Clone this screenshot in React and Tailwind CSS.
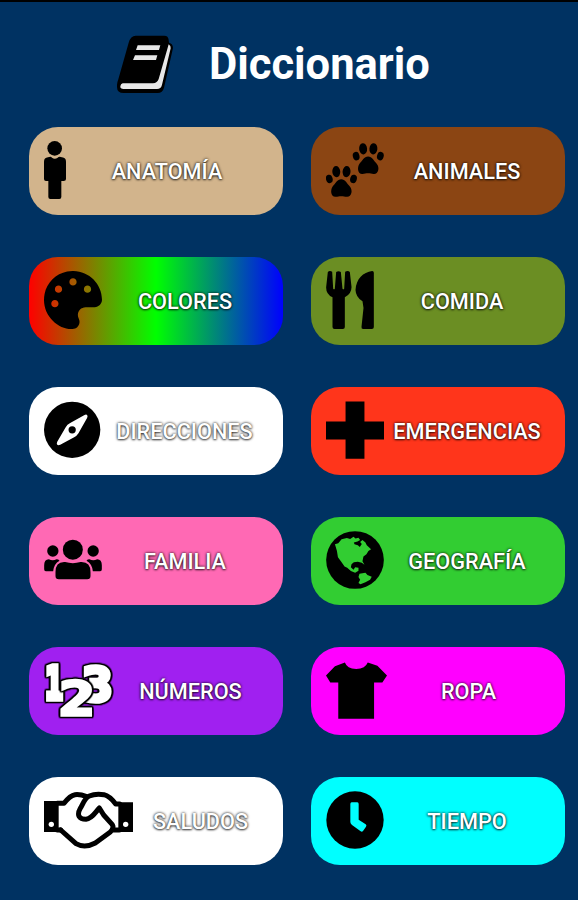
import React from "react";
import { FaPalette } from "react-icons/fa";

const PersonIcon = () => (
  <svg viewBox="72 64 66 174" className="h-[58px] w-[22px] shrink-0">
    <circle cx="104" cy="86" r="22" />
    <path d="M84 113 Q93 109 96 114 Q104 120 113 114 Q117 109 126 113 Q138 114 138 126 V178 Q138 184 131 184 H124 V232 Q124 238 118 238 H91 Q85 238 85 232 V184 H78 Q72 184 72 178 V126 Q72 114 84 113Z" />
  </svg>
);

const Paw = () => (
  <>
    <ellipse cx="10" cy="39" rx="10" ry="13" transform="rotate(-15 10 39)" />
    <ellipse cx="31" cy="17" rx="12" ry="17" transform="rotate(-5 31 17)" />
    <ellipse cx="62" cy="17" rx="12" ry="17" transform="rotate(5 62 17)" />
    <ellipse cx="83" cy="39" rx="10" ry="13" transform="rotate(15 83 39)" />
    <path d="M46 40 C58 40 64 53 72 62 C82 74 77 94 63 93 C56 93 53 91 46 91 C39 91 36 93 29 93 C15 94 12 74 20 62 C28 53 34 40 46 40Z" />
  </>
);

const PawsIcon = () => (
  <svg viewBox="62 64 175 174" className="h-[58px] w-[58px] shrink-0">
    <g transform="translate(143 70)"><Paw /></g>
    <g transform="translate(62 139)"><Paw /></g>
  </svg>
);

const CutleryIcon = () => (
  <svg viewBox="62 64 143 174" className="h-[58px] w-[48px] shrink-0">
    <path d="M67 67 Q72 62 80 66 L83 117 Q86 121 88 117 L92 67 Q99 62 106 67 L111 117 Q114 121 116 117 L119 66 Q128 62 133 67 L138 111 Q139 132 118 143 V232 Q118 238 112 238 H87 Q81 238 81 232 V143 Q61 133 62 112Z" />
    <path d="M200 64 Q205 64 205 69 V232 Q205 238 199 238 H173 Q167 238 168 231 L174 175 L171 155 Q151 143 150 121 C152 87 173 68 200 64Z" />
  </svg>
);

const CompassIcon = () => (
  <svg viewBox="72 65 172 173" className="h-[58px] w-[57px] shrink-0">
    <circle cx="157" cy="151" r="85" />
    <path d="M202 106 Q205 109 202 115 L176 161 Q171 169 163 173 L121 196 Q115 199 112 196 Q109 193 112 187 L137 144 Q142 134 151 130 L193 107 Q199 103 202 106Z" fill="white" />
    <circle cx="157" cy="151" r="11" />
  </svg>
);

const CrossIcon = () => (
  <svg viewBox="62 64 175 174" className="h-[58px] w-[58px] shrink-0">
    <path d="M121 65H178V125H237V180H178V238H121V180H62V125H121Z" />
  </svg>
);

const FamilyIcon = () => (
  <svg viewBox="72 64 173 174" className="h-[58px] w-[58px] shrink-0">
    <circle cx="158" cy="120" r="30" />
    <circle cx="98" cy="124" r="17" />
    <circle cx="219" cy="124" r="17" />
    <path d="M135 157 Q158 164 181 157 Q211 155 211 187 V199 Q211 209 201 209 H116 Q106 209 106 199 V187 Q106 155 135 157Z" />
    <path d="M86 149 Q98 155 109 149 Q115 149 118 153 Q101 162 99 185 H77 Q72 185 72 179 V167 Q72 149 86 149Z" />
    <path d="M231 149 Q219 155 208 149 Q202 149 199 153 Q216 162 218 185 H240 Q245 185 245 179 V167 Q245 149 231 149Z" />
  </svg>
);

const GlobeIcon = () => (
  <svg viewBox="62 64 175 175" className="h-[58px] w-[58px] shrink-0">
    <circle cx="149.500" cy="151.500" r="87" />
    <path
      d="M89 104 L99 101 L109 89 L125 85 L135 88 L145 81 L151 87 L160 84 L165 91 L157 96 L146 99 L148 104 L158 107 L164 112 L170 103 L165 97 L172 91 L181 99 L185 107 L198 119 L190 124 L184 134 L175 141 L172 155 L178 166 L170 160 L158 157 L146 158 L139 164 L137 173 L145 181 L150 173 L160 175 L160 184 L150 190 L137 185 L126 175 L118 171 L108 157 L98 143 L95 124Z"
      fill="#32cd32"
    />
    <path d="M163 193 L181 190 L187 197 L200 202 L195 211 L181 219 L166 225 L160 221 L165 211 L160 203Z" fill="#32cd32" />
  </svg>
);

const digitClass =
  "[filter:drop-shadow(4px_0_0_#000)_drop-shadow(-4px_0_0_#000)_drop-shadow(0_4px_0_#000)_drop-shadow(0_-4px_0_#000)]";

const NumbersIcon = () => (
  <svg viewBox="72 64 205 176" className="h-[58px] w-[69px] shrink-0 overflow-visible">
    <g
      fill="white"
      stroke="white"
      strokeLinejoin="miter"
      className="font-['DejaVu_Sans_Mono',monospace] font-bold"
    >
      <text x="74" y="178" fontSize="134" strokeWidth="17" textLength="53" lengthAdjust="spacingAndGlyphs" className={digitClass}>1</text>
      <text x="186" y="185" fontSize="138" strokeWidth="14" textLength="91" lengthAdjust="spacingAndGlyphs" className={digitClass}>3</text>
      <text x="116" y="229" fontSize="141" strokeWidth="10" textLength="108" lengthAdjust="spacingAndGlyphs" className={digitClass}>2</text>
    </g>
  </svg>
);

const ShirtIcon = () => (
  <svg viewBox="64 65 184 174" className="h-[58px] w-[61px] shrink-0">
    <path d="M121 69 Q127 87 155 89 Q183 87 190 69 L219 79 L248 108 L234 129 H209 V239 H101 V129 H77 L64 108 L91 80Z" />
  </svg>
);

const HandshakeIcon = () => (
  <svg viewBox="72 64 267 174" className="h-[58px] w-[89px] shrink-0">
    <path d="M72 94H116V187H72ZM295 98H339V187H295Z" />
    <g fill="none" stroke="black" strokeWidth="15" strokeLinejoin="round" strokeLinecap="round">
      <path d="M112 101 H132 Q150 77 165 75 Q180 73 200 81" />
      <path d="M299 103 H287 Q269 79 252 75 Q226 71 208 79 C194 85 190 101 181 116 C169 137 178 149 198 149 C216 147 225 129 238 115 L251 136 L277 165 Q283 175 271 187 L226 220 Q194 237 168 222 L122 181" />
      <path d="M280 181 H298" />
      <path d="M112 181 H122" />
    </g>
    <circle cx="94" cy="164" r="8" fill="white" />
    <circle cx="317" cy="164" r="8" fill="white" />
  </svg>
);

const ClockIcon = () => (
  <svg viewBox="63 456 174 174" className="h-[58px] w-[58px] shrink-0">
    <circle cx="150" cy="543" r="86" />
    <path d="M140 490 H157 Q161 490 161 495 V542 L182 556 Q186 559 183 563 L174 576 Q171 580 167 577 L141 558 Q136 554 136 549 V495 Q136 490 140 490Z" fill="#00ffff" />
  </svg>
);

const BookIcon = () => (
  <svg viewBox="50 104 168 174" className="h-[58px] w-[56px] shrink-0">
    <path d="M106 106 H192 Q204 106 205 119 L206 127 Q218 130 218 143 L191 262 Q187 278 172 278 H70 Q50 278 50 260 Q49 250 54 237 L85 127 Q91 106 106 106Z" />
    <path d="M205 132 Q212 136 211 144 L185 253 Q182 266 170 266 H70 Q59 266 60 258 Q61 250 67 249 H158 Q171 248 175 236 L201 146Z" fill="#e8e8e8" />
    <path d="M112 135 H180 L176 149 H107ZM104 165 H171 L167 179 H98Z" fill="#e8e8e8" />
  </svg>
);

const categories = [
  { name: "ANATOMÍA", icon: <PersonIcon />, bg: "bg-[#d2b48c]" },
  { name: "ANIMALES", icon: <PawsIcon />, bg: "bg-[#8b4513]" },
  {
    name: "COLORES",
    icon: <FaPalette className="h-[58px] w-[58px] shrink-0" />,
    bg: "bg-[linear-gradient(90deg,#ff0000,#00ff00,#0000ff)]",
  },
  { name: "COMIDA", icon: <CutleryIcon />, bg: "bg-[#6b8e23]" },
  { name: "DIRECCIONES", icon: <CompassIcon />, bg: "bg-white" },
  { name: "EMERGENCIAS", icon: <CrossIcon />, bg: "bg-[#ff351b]" },
  { name: "FAMILIA", icon: <FamilyIcon />, bg: "bg-[#ff69b4]" },
  { name: "GEOGRAFÍA", icon: <GlobeIcon />, bg: "bg-[#32cd32]" },
  { name: "NÚMEROS", icon: <NumbersIcon />, bg: "bg-[#a020f0]" },
  { name: "ROPA", icon: <ShirtIcon />, bg: "bg-[#ff00ff]" },
  { name: "SALUDOS", icon: <HandshakeIcon />, bg: "bg-white" },
  { name: "TIEMPO", icon: <ClockIcon />, bg: "bg-[#00ffff]" },
];

const App = () => {
  return (
    <main className="h-[900px] w-[578px] overflow-hidden border-t-2 border-black bg-[#003262] font-[Roboto,sans-serif] text-white">
      {/* Header */}
      <header className="flex h-[125px] items-center gap-9 pb-0.5 pl-[117px] text-black">
        <BookIcon />
        <h1 className="pt-[3px] text-[43.500px] leading-none font-bold text-white">Diccionario</h1>
      </header>

      {/* Categories */}
      <div className="grid grid-cols-[254px_254px] gap-x-7 gap-y-[42.5px] pl-[29px]">
        {categories.map(({ name, icon, bg }) => (
          <button
            key={name}
            className={`flex h-[87.5px] items-center rounded-[29px] px-[15px] pb-px text-black [&>svg]:fill-current ${bg}`}
          >
            {icon}
            <span className="flex-1 pt-[5px] text-center text-[21.7px] font-medium whitespace-nowrap text-white [text-shadow:0_0_3px_#000,0_1px_2px_#0008]">
              {name}
            </span>
          </button>
        ))}
      </div>
    </main>
  );
};

export default App;
